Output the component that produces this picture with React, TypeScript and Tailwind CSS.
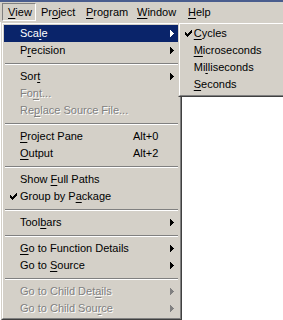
import React from 'react'

type Item =
  | { sep: true }
  | {
      sep?: false
      label: string
      u?: number
      arrow?: boolean
      check?: boolean
      disabled?: boolean
      active?: boolean
      shortcut?: string
    }

const menuItems: Item[] = [
  { label: 'Scale', u: 3, arrow: true, active: true },
  { label: 'Precision', u: 1, arrow: true },
  { sep: true },
  { label: 'Sort', u: 3, arrow: true },
  { label: 'Font...', u: 2, disabled: true },
  { label: 'Replace Source File...', u: 2, disabled: true },
  { sep: true },
  { label: 'Project Pane', u: 0, shortcut: 'Alt+0' },
  { label: 'Output', u: 0, shortcut: 'Alt+2' },
  { sep: true },
  { label: 'Show Full Paths', u: 5 },
  { label: 'Group by Package', u: 10, check: true },
  { sep: true },
  { label: 'Toolbars', u: 4, arrow: true },
  { sep: true },
  { label: 'Go to Function Details', u: 0, arrow: true },
  { label: 'Go to Source', u: 6, arrow: true },
  { sep: true },
  { label: 'Go to Child Details', u: 15, arrow: true, disabled: true },
  { label: 'Go to Child Source', u: 15, arrow: true, disabled: true },
]

const scaleItems: Item[] = [
  { label: 'Cycles', u: 0, check: true },
  { label: 'Microseconds', u: 0 },
  { label: 'Milliseconds', u: 2 },
  { label: 'Seconds', u: 0 },
]

const menuBar = [
  { label: 'View', u: 0, w: 'w-[34px]', pressed: true },
  { label: 'Project', u: 2, w: 'w-[45px]' },
  { label: 'Program', u: 0, w: 'w-[51px]' },
  { label: 'Window', u: 0, w: 'w-[51px]' },
  { label: 'Help', u: 0, w: 'w-[30px]' },
]

function Mnemonic({ text, u }: { text: string; u?: number }) {
  if (u === undefined) return <>{text}</>
  return (
    <>
      {text.slice(0, u)}
      <span className="underline underline-offset-[2px]">{text[u]}</span>
      {text.slice(u + 1)}
    </>
  )
}

function Check({ color }: { color: string }) {
  return (
    <svg width="7" height="7" viewBox="0 0 7 7" shapeRendering="crispEdges">
      <path
        d="M0 2h1v3h-1zM1 3h1v3h-1zM2 4h1v3h-1zM3 3h1v3h-1zM4 2h1v3h-1zM5 1h1v3h-1zM6 0h1v3h-1z"
        fill={color}
      />
    </svg>
  )
}

function Arrow({ color }: { color: string }) {
  return (
    <svg width="4" height="7" viewBox="0 0 4 7" shapeRendering="crispEdges">
      <path d="M0 0h1v7h-1zM1 1h1v5h-1zM2 2h1v3h-1zM3 3h1v1h-1z" fill={color} />
    </svg>
  )
}

function Row({ item, labelW }: { item: Exclude<Item, { sep: true }>; labelW: string }) {
  const text = item.active ? 'text-white' : item.disabled ? 'text-[#808080] [text-shadow:1px_1px_0_#fff]' : 'text-black'
  const ink = item.active ? '#ffffff' : item.disabled ? '#808080' : '#000000'
  return (
    <div className={`flex h-[17px] items-center ${item.active ? 'bg-[#0a246a]' : ''} ${text}`}>
      <div className="flex w-[16px] justify-center pl-[3px]">{item.check && <Check color={ink} />}</div>
      <div className={`${labelW} whitespace-nowrap leading-none`}>
        <Mnemonic text={item.label} u={item.u} />
      </div>
      <div className="w-[37px] whitespace-nowrap leading-none">{item.shortcut}</div>
      <div className="flex w-[8px]">{item.arrow && <Arrow color={ink} />}</div>
    </div>
  )
}

function Separator() {
  return (
    <div className="flex h-[9px] flex-col justify-center px-[1px]">
      <div className="h-px bg-[#808080]" />
      <div className="h-px bg-white" />
    </div>
  )
}

function Panel({ children, className }: { children: React.ReactNode; className: string }) {
  return (
    <div className={`absolute border border-t-[#d4d0c8] border-l-[#d4d0c8] border-r-[#404040] border-b-[#404040] ${className}`}>
      <div className="h-full border border-t-white border-l-white border-r-[#808080] border-b-[#808080] bg-[#d4d0c8] p-px">
        {children}
      </div>
    </div>
  )
}

export default function App() {
  return (
    <div className="relative h-[320px] w-[283px] overflow-hidden bg-white font-['Liberation_Sans',Arial,sans-serif] text-[11px]">
      {/* window title remnant */}
      <div className="h-[2px] bg-[#4a5d8e]" />

      {/* menu bar */}
      <div className="flex h-[20px] items-center bg-[#d4d0c8] pl-[2px] text-black">
        {menuBar.map((m) => (
          <div
            key={m.label}
            className={`flex h-[18px] items-center pl-[5px] leading-none ${m.w} ${
              m.pressed ? 'border border-t-[#808080] border-l-[#808080] border-r-white border-b-white pl-[4px]' : ''
            }`}
          >
            <Mnemonic text={m.label} u={m.u} />
          </div>
        ))}
      </div>

      {/* View dropdown */}
      <Panel className="left-[1px] top-[22px] h-[298px] w-[181px]">
        {menuItems.map((it, i) =>
          it.sep ? <Separator key={i} /> : <Row key={i} item={it} labelW="w-[113px]" />
        )}
      </Panel>

      {/* Scale submenu */}
      <Panel className="left-[178px] top-[22px] h-[75px] w-[120px]">
        {scaleItems.map((it, i) =>
          it.sep ? <Separator key={i} /> : <Row key={i} item={it} labelW="w-[90px]" />
        )}
      </Panel>
    </div>
  )
}
